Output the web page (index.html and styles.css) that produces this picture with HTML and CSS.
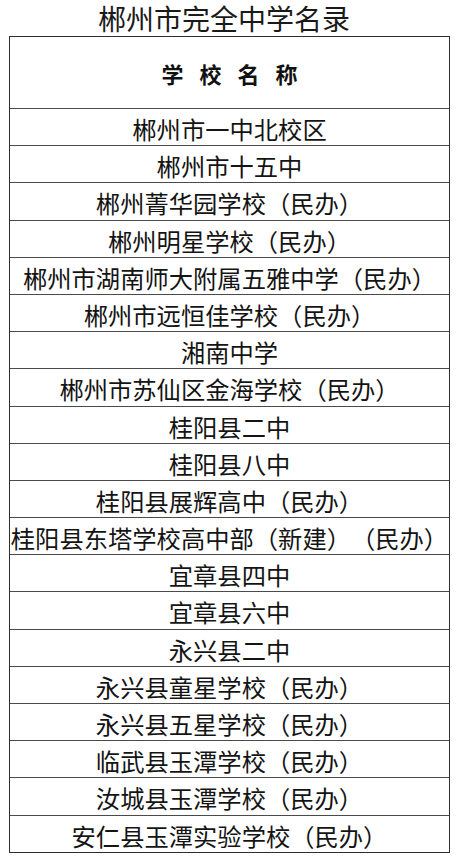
FILE: index.html
```html
<!DOCTYPE html>
<html lang="zh-CN">
<head>
<meta charset="utf-8">
<title>郴州市完全中学名录</title>
<link rel="stylesheet" href="styles.css">
</head>
<body>
<div class="page">
  <h1 class="title">郴州市完全中学名录</h1>
  <div class="table">
    <div class="head">学校名称</div>
    <div class="row">郴州市一中北校区</div>
    <div class="row">郴州市十五中</div>
    <div class="row">郴州菁华园学校（民办）</div>
    <div class="row">郴州明星学校（民办）</div>
    <div class="row">郴州市湖南师大附属五雅中学（民办）</div>
    <div class="row">郴州市远恒佳学校（民办）</div>
    <div class="row">湘南中学</div>
    <div class="row">郴州市苏仙区金海学校（民办）</div>
    <div class="row">桂阳县二中</div>
    <div class="row">桂阳县八中</div>
    <div class="row">桂阳县展辉高中（民办）</div>
    <div class="row">桂阳县东塔学校高中部（新建）（民办）</div>
    <div class="row">宜章县四中</div>
    <div class="row">宜章县六中</div>
    <div class="row">永兴县二中</div>
    <div class="row">永兴县童星学校（民办）</div>
    <div class="row">永兴县五星学校（民办）</div>
    <div class="row">临武县玉潭学校（民办）</div>
    <div class="row">汝城县玉潭学校（民办）</div>
    <div class="row">安仁县玉潭实验学校（民办）</div>
  </div>
</div>
</body>
</html>
```

FILE: styles.css
```css
html, body {
  margin: 0;
  padding: 0;
  background: #ffffff;
}

body {
  font-family: "Noto Sans CJK SC", "Noto Sans", sans-serif;
  color: #141414;
  text-spacing-trim: space-all;
}

.page {
  width: 460px;
  height: 864px;
  box-sizing: border-box;
  padding: 0 10px 0 9px;
}

.title {
  margin: 0;
  height: 36px;
  padding: 4.5px 11px 0 0;
  box-sizing: border-box;
  font-family: "Liberation Sans", "Noto Sans CJK SC", sans-serif;
  font-size: 28px;
  font-weight: 400;
  line-height: 31.5px;
  text-align: center;
  color: #1a1a1a;
}

.table {
  border: 1px solid #2e2e2e;
}

.head {
  height: 71px;
  box-sizing: border-box;
  display: flex;
  align-items: center;
  justify-content: center;
  padding-left: 16px;
  font-size: 22px;
  font-weight: 700;
  letter-spacing: 16px;
  color: #111111;
}

.row {
  height: 37.2px;
  box-sizing: border-box;
  border-top: 1px solid #4a4a4a;
  padding-top: 4px;
  font-size: 24.3px;
  line-height: 32.2px;
  text-align: center;
  white-space: nowrap;
}
```
